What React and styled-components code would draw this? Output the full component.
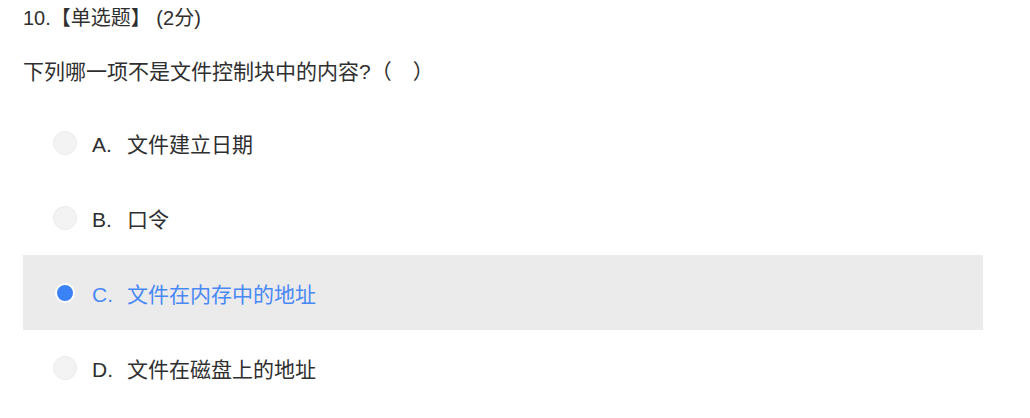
import React from 'react';
import styled, { createGlobalStyle } from 'styled-components';

const GlobalStyle = createGlobalStyle`
  body {
    margin: 0;
    background: #fff;
    font-family: "Liberation Sans", "Noto Sans CJK SC", sans-serif;
    color: #2f2f2f;
  }
`;

const Container = styled.div`
  padding-left: 23px;
  width: 960px;
`;

const Title = styled.div`
  font-size: 20px;
  line-height: 36px;
`;

const Question = styled.div`
  font-size: 21px;
  line-height: 36px;
  margin-top: 18px;
  margin-bottom: 15px;
`;

const OptionRow = styled.div`
  display: flex;
  align-items: center;
  height: 75px;
  padding-left: 30px;
  font-size: 21px;
  background: ${p => (p.$selected ? '#ebebeb' : 'transparent')};
  color: ${p => (p.$selected ? '#4a88f5' : '#2f2f2f')};
`;

const Radio = styled.span`
  width: 24px;
  height: 24px;
  box-sizing: border-box;
  border-radius: 50%;
  display: flex;
  align-items: center;
  justify-content: center;
  margin-right: 15px;
  background: ${p => (p.$checked ? 'transparent' : '#f3f3f3')};
  border: ${p => (p.$checked ? 'none' : '1px solid #ebebeb')};

  &::after {
    content: '';
    display: ${p => (p.$checked ? 'block' : 'none')};
    width: 16px;
    height: 16px;
    border-radius: 50%;
    background: #3b82f6;
    border: 2px solid #fff;
  }
`;

const Letter = styled.span`
  width: 35px;
  padding-top: 4px;
`;

const options = [
  { key: 'A', text: '文件建立日期' },
  { key: 'B', text: '口令' },
  { key: 'C', text: '文件在内存中的地址', selected: true },
  { key: 'D', text: '文件在磁盘上的地址' },
];

export default function App() {
  return (
    <Container>
      <GlobalStyle />
      <Title>10.【单选题】 (2分)</Title>
      <Question>下列哪一项不是文件控制块中的内容?（　）</Question>
      {options.map(o => (
        <OptionRow key={o.key} $selected={o.selected}>
          <Radio $checked={o.selected} />
          <Letter>{o.key}.</Letter>
          <span>{o.text}</span>
        </OptionRow>
      ))}
    </Container>
  );
}
